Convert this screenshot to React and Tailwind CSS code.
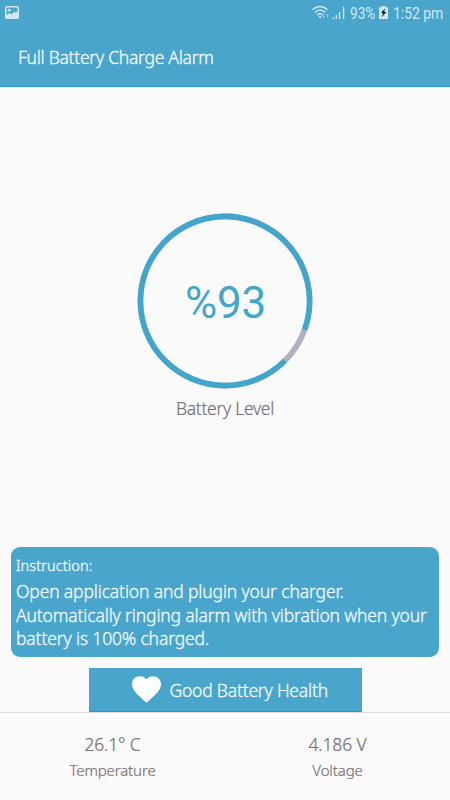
const level = 93

const stats = [
    { value: '26.1° C', label: 'Temperature' },
    { value: '4.186 V', label: 'Voltage' },
]

function StatusBar() {
    return (
        <div className="flex h-7 items-start justify-between pl-[5px] pr-1.5 text-[#cfe8f3]">
            <svg className="mt-1.5" width="14" height="13" viewBox="0 0 14 13">
                <rect x="0.75" y="0.75" width="12.5" height="11.5" rx="0.8" fill="none" stroke="currentColor" strokeWidth="1.5" />
                <circle cx="4.3" cy="4.2" r="1.4" fill="currentColor" />
                <path d="M1 9.5L4.2 6.9L6.4 8.3L9.2 5.4L10.4 6.8L11.6 5.6L13 7V12H1Z" fill="currentColor" />
            </svg>
            <div className="flex items-start">
                <svg className="mt-[5px]" width="18" height="15" viewBox="0 0 18 15" fill="none" stroke="currentColor" strokeWidth="1.4">
                    <path d="M0.6 4.8C4.8 0.4 11.2 0.4 15.4 4.8" />
                    <path d="M2.9 7.4C5.8 4.4 10.2 4.4 13.1 7.4" />
                    <path d="M5.2 10C6.9 8.3 9.1 8.3 10.8 10" />
                    <circle cx="8" cy="11.6" r="1.2" fill="currentColor" stroke="none" />
                    <path d="M11.6 9.2V13M10.2 11.6L11.6 13L13 11.6M15.5 13V9.2M14.1 10.6L15.5 9.2L16.9 10.6" strokeWidth="0.8" opacity="0.6" />
                </svg>
                <svg className="ml-0.5 mt-1.5" width="13" height="14" viewBox="0 0 13 14" fill="currentColor">
                    <path d="M0 13L2 10.6V13zM3.6 9H5V13H3.6zM6.8 6H8.2V13H6.8zM10.9 0.8H12.3V13H10.9z" />
                </svg>
                <span className="ml-[5px] w-[26px] whitespace-nowrap">
                    <span className="inline-block origin-left scale-x-[0.85] text-base leading-7">{level}%</span>
                </span>
                <svg className="ml-[3px] mt-1.5" width="9" height="13" viewBox="0 0 9 13">
                    <path d="M2.5 0H6.5V1.3H9V13H0V1.3H2.5Z" fill="currentColor" />
                    <path d="M6.2 2.3L1.8 7H4L2.7 11.2L7.4 6.1H5.2Z" fill="#10242e" />
                </svg>
                <span className="ml-[5px] w-[51px] whitespace-nowrap">
                    <span className="inline-block origin-left scale-x-[0.87] text-base leading-7">1:52 pm</span>
                </span>
            </div>
        </div>
    )
}

function BatteryRing() {
    return (
        <div className="grid size-[176px] place-items-center">
            <svg className="col-start-1 row-start-1" width="176" height="176" viewBox="0 0 176 176" fill="none" strokeWidth="5.6">
                <circle cx="88" cy="88" r="84.6" stroke="#adb1c0" />
                <circle
                    cx="88"
                    cy="88"
                    r="84.6"
                    stroke="#43a5cb"
                    pathLength="100"
                    strokeDasharray={`${level} ${100 - level}`}
                    transform="rotate(45 88 88)"
                />
            </svg>
            <span className="col-start-1 row-start-1 pl-px pt-1 font-['Roboto',sans-serif] text-[44px] font-normal leading-none tracking-[-0.2px] text-[#43a5cb]">
                %{level}
            </span>
        </div>
    )
}

export default function App() {
    return (
        <div className="flex h-screen w-full flex-col overflow-hidden bg-[#fafafa] font-['Noto_Sans',sans-serif] font-light text-[#776f73]">
            <header className="h-[87px] shrink-0 border-b border-[#2b9cc7] bg-[#49a5cb]">
                <div className="font-['Roboto',sans-serif] font-normal">
                    <StatusBar />
                </div>
                <h1 className="mt-[17px] pl-[18px] text-[17.5px] font-light leading-6 tracking-[-0.27px] text-[#f2fbff] [-webkit-text-stroke:0.3px]">Full Battery Charge Alarm</h1>
            </header>

            <main className="flex h-[460px] shrink-0 flex-col items-center pt-[126px]">
                <BatteryRing />
                <p className="mt-[7px] text-[17.5px] leading-6 tracking-[-0.3px] [-webkit-text-stroke:0.2px]">Battery Level</p>
            </main>

            <section className="mx-[11px] h-[110px] shrink-0 rounded-[9px] bg-[#49a5cb] px-[5px] pt-2 text-[#f2fbff] [-webkit-text-stroke:0.3px]">
                <h2 className="text-[14.5px] font-light leading-5 tracking-[0.1px]">Instruction:</h2>
                <p className="mt-[5px] whitespace-nowrap text-[17.5px] leading-[23.5px] tracking-[-0.14px]">
                    Open application and plugin your charger.<br />
                    Automatically ringing alarm with vibration when your<br />
                    battery is 100% charged.
                </p>
            </section>

            <div className="mx-auto mt-[11px] flex h-11 w-[273px] shrink-0 items-center border-b border-[#149bcf] bg-[#49a5cb] pl-[43px] text-[#f2fbff]">
                <svg width="29" height="27" viewBox="2 3 20 18.35" fill="#fff">
                    <path d="M12 21.35l-1.45-1.32C5.4 15.36 2 12.28 2 8.5 2 5.42 4.42 3 7.5 3c1.74 0 3.41.81 4.5 2.09C13.09 3.81 14.76 3 16.5 3 19.58 3 22 5.42 22 8.5c0 3.78-3.4 6.86-8.55 11.54L12 21.35z" />
                </svg>
                <span className="ml-[9px] whitespace-nowrap text-[17.5px] leading-6 tracking-[-0.2px] [-webkit-text-stroke:0.3px]">Good Battery Health</span>
            </div>

            <footer className="grid flex-1 grid-cols-2 border-t border-[#dedede] pt-[19px] text-center [-webkit-text-stroke:0.2px]">
                {stats.map((stat) => (
                    <div key={stat.label}>
                        <p className="text-[17.5px] leading-6 tracking-[-0.15px]">{stat.value}</p>
                        <p className="mt-0.5 text-[15px] leading-6 tracking-[-0.12px]">{stat.label}</p>
                    </div>
                ))}
            </footer>
        </div>
    )
}
